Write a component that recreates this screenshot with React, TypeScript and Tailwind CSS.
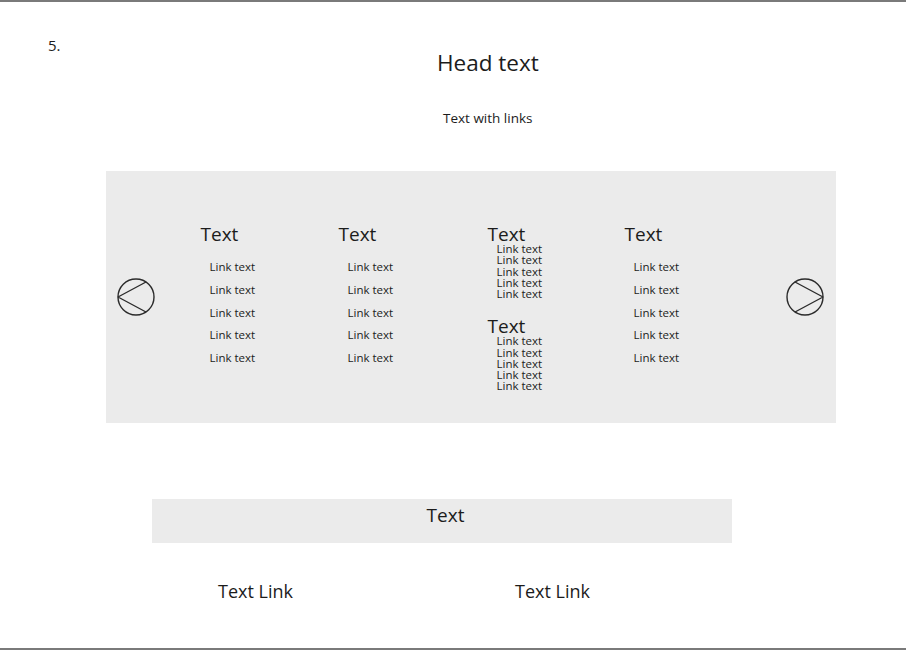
const ArrowCircle = ({ dir }: { dir: "left" | "right" }) => (
  <svg width="40" height="40" viewBox="0 0 40 40" fill="none" stroke="#2b2b2b" strokeWidth="1.4">
    <circle cx="20" cy="20" r="18" />
    {dir === "left" ? (
      <path d="M2 20 L30 5 M2 20 L30 35" />
    ) : (
      <path d="M38 20 L10 5 M38 20 L10 35" />
    )}
  </svg>
);

const LinkList = ({ tight = false }: { tight?: boolean }) => (
  <ul className={tight ? "pl-[9px] leading-[11.25px]" : "pl-[9px] mt-[10px] leading-[22.75px]"}>
    {Array.from({ length: 5 }).map((_, i) => (
      <li key={i} className="text-[11.5px]">
        Link text
      </li>
    ))}
  </ul>
);

const Column = ({ width }: { width: string }) => (
  <div className={`${width} shrink-0`}>
    <h3 className="text-[19px] leading-[24px]">Text</h3>
    <LinkList />
  </div>
);

export default function App() {
  return (
    <div className="w-[906px] h-[650px] bg-white border-t-2 border-b-2 border-[#7a7a7a] text-[#1c1c1c] font-['Open_Sans',sans-serif]">
      <header className="flex">
        <div className="w-[437px] pl-[48px] pt-[33px] text-[15px] leading-[20px]">5.</div>
        <div className="pt-[45px]">
          <h1 className="text-[22.5px] leading-[32px]">Head text</h1>
          <p className="mt-[29px] ml-[6px] text-[13.5px] leading-[20px]">Text with links</p>
        </div>
      </header>

      <section className="ml-[106px] mt-[43px] w-[730px] h-[252px] bg-[#ebebeb] flex pl-[10px] pr-[11px]">
        <div className="self-center">
          <ArrowCircle dir="left" />
        </div>
        <div className="flex pt-[51px] ml-[44.5px]">
          <Column width="w-[138px]" />
          <Column width="w-[149px]" />
          <div className="w-[137px] shrink-0">
            <h3 className="text-[19px] leading-[24px]">Text</h3>
            <div className="-mt-[3px]">
              <LinkList tight />
            </div>
            <h3 className="mt-[15px] text-[19px] leading-[24px]">Text</h3>
            <div className="-mt-[3px]">
              <LinkList tight />
            </div>
          </div>
          <Column width="w-[160.5px]" />
        </div>
        <div className="self-center">
          <ArrowCircle dir="right" />
        </div>
      </section>

      <div className="ml-[152px] mt-[76px] w-[580px] h-[44px] bg-[#ebebeb] flex justify-center pl-[7px] pt-[4px]">
        <span className="text-[19px] leading-[24px]">Text</span>
      </div>

      <div className="flex mt-[36px] pl-[218px] text-[18px] leading-[24px]">
        <a className="w-[297px]">Text Link</a>
        <a>Text Link</a>
      </div>
    </div>
  );
}
